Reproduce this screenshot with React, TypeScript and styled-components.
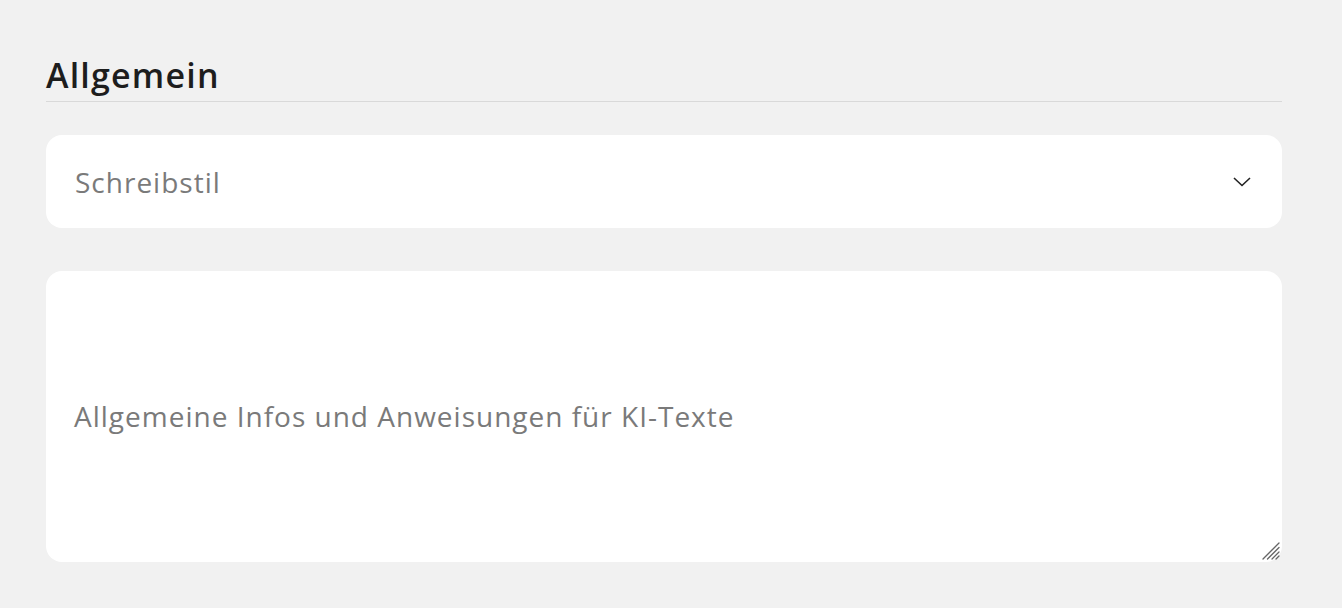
import React from "react";
import styled, { createGlobalStyle } from "styled-components";

const Global = createGlobalStyle`
  html, body { margin: 0; padding: 0; background: #f1f1f1; }
  body { font-family: "Open Sans", "Liberation Sans", sans-serif; }
  * { box-sizing: border-box; }
`;

const Page = styled.div`
  padding: 50px 60px 0 46px;
  display: flex;
  flex-direction: column;
`;

const Heading = styled.h2`
  margin: 0;
  font-size: 34px;
  font-weight: 600;
  letter-spacing: 1.2px;
  color: #1d1d1d;
  line-height: 51px;
  border-bottom: 1px solid #d9d9d9;
`;

const Select = styled.div`
  margin-top: 33px;
  height: 93px;
  background: #fff;
  border-radius: 16px;
  display: flex;
  align-items: center;
  justify-content: space-between;
  padding: 0 30px 0 29px;
  font-size: 28px;
  letter-spacing: 1px;
  color: #7a7a7a;
`;

const Field = styled.div`
  position: relative;
  margin-top: 43px;
  height: 291px;
  display: flex;
`;

const TextArea = styled.textarea`
  flex: 1;
  background: #fff;
  border: none;
  border-radius: 16px;
  padding: 126px 28px 0;
  font-family: inherit;
  font-size: 28px;
  letter-spacing: 1px;
  line-height: 38px;
  color: #333;
  resize: none;
  outline: none;
  &::placeholder { color: #7a7a7a; }
`;

const Grip = styled.svg`
  position: absolute;
  right: 1px;
  bottom: 1px;
  pointer-events: none;
`;

export default function App() {
  return (
    <>
      <Global />
      <Page>
        <Heading>Allgemein</Heading>
        <Select>
          <span>Schreibstil</span>
          <svg width="20" height="12" viewBox="0 0 20 12" fill="none">
            <path d="M2 2 L10 9.5 L18 2" stroke="#222" strokeWidth="1.6" />
          </svg>
        </Select>
        <Field>
          <TextArea placeholder="Allgemeine Infos und Anweisungen für KI-Texte" />
          <Grip width="20" height="20" viewBox="0 0 20 20">
            <g stroke="#666" strokeWidth="1.3" strokeLinecap="round">
              <line x1="2" y1="18" x2="18" y2="2" />
              <line x1="6.5" y1="18" x2="18" y2="6.5" />
              <line x1="11" y1="18" x2="18" y2="11" />
              <line x1="15" y1="18" x2="18" y2="15" />
            </g>
          </Grip>
        </Field>
      </Page>
    </>
  );
}
